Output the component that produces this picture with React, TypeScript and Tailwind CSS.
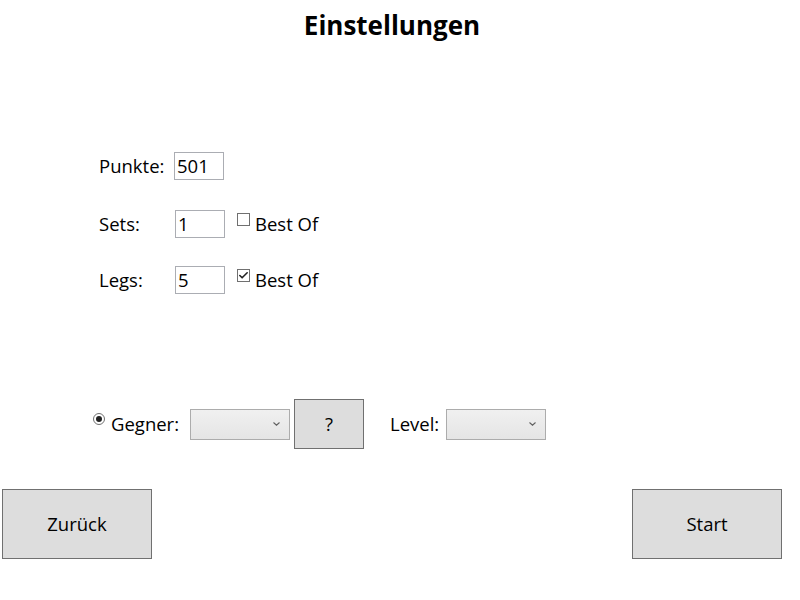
import { Check } from 'lucide-react';

function Field({ value }: { value: string }) {
  return (
    <div className="w-[50px] h-[28px] border border-[#abadb3] bg-white flex items-center pl-[2px] leading-none">
      {value}
    </div>
  );
}

function BestOf({ checked }: { checked: boolean }) {
  return (
    <div className="flex items-center ml-[12px]">
      <div className="w-[13px] h-[13px] border border-[#707070] bg-white self-start mt-[3px] flex items-center justify-center">
        {checked && <Check className="w-[11px] h-[11px] text-[#222]" strokeWidth={3.5} />}
      </div>
      <span className="ml-[5px]">Best Of</span>
    </div>
  );
}

function Combo({ width }: { width: string }) {
  return (
    <div className={`${width} h-[31px] border border-[#acacac] bg-gradient-to-b from-[#f0f0f0] to-[#e5e5e5] flex items-center justify-end pr-[9px]`}>
      <svg width="7" height="4" viewBox="0 0 7 4">
        <path d="M0.5 0.5 L3.5 3.2 L6.5 0.5" fill="none" stroke="#606060" strokeWidth="1.1" />
      </svg>
    </div>
  );
}

export default function App() {
  return (
    <div className="w-[800px] h-[600px] bg-white flex flex-col font-['Open_Sans',sans-serif] text-[18.5px] text-black">
      <h1 className="text-center font-bold text-[26px] h-[50px] leading-[50px] pr-[16px]">Einstellungen</h1>

      <div className="flex flex-col pl-[99px] mt-[102px]">
        <div className="flex items-center h-[28px]">
          <span className="w-[75px]">Punkte:</span>
          <Field value="501" />
        </div>
        <div className="flex items-center h-[28px] mt-[30px]">
          <span className="w-[76px]">Sets:</span>
          <Field value="1" />
          <BestOf checked={false} />
        </div>
        <div className="flex items-center h-[28px] mt-[28px]">
          <span className="w-[76px]">Legs:</span>
          <Field value="5" />
          <BestOf checked={true} />
        </div>
      </div>

      <div className="flex items-center pl-[93px] mt-[105px] h-[50px]">
        <div className="w-[12px] h-[12px] rounded-full border border-[#707070] bg-white flex items-center justify-center self-start mt-[14px]">
          <div className="w-[6px] h-[6px] rounded-full bg-[#222]" />
        </div>
        <span className="ml-[6px] w-[79px]">Gegner:</span>
        <Combo width="w-[100px]" />
        <button className="ml-[4px] w-[70px] h-[50px] bg-[#dddddd] border border-[#707070]">?</button>
        <span className="ml-[26px] w-[56px]">Level:</span>
        <Combo width="w-[100px]" />
      </div>

      <div className="flex justify-between pl-[2px] pr-[18px] mt-[40px]">
        <button className="w-[150px] h-[70px] bg-[#dddddd] border border-[#707070]">Zurück</button>
        <button className="w-[150px] h-[70px] bg-[#dddddd] border border-[#707070]">Start</button>
      </div>
    </div>
  );
}
